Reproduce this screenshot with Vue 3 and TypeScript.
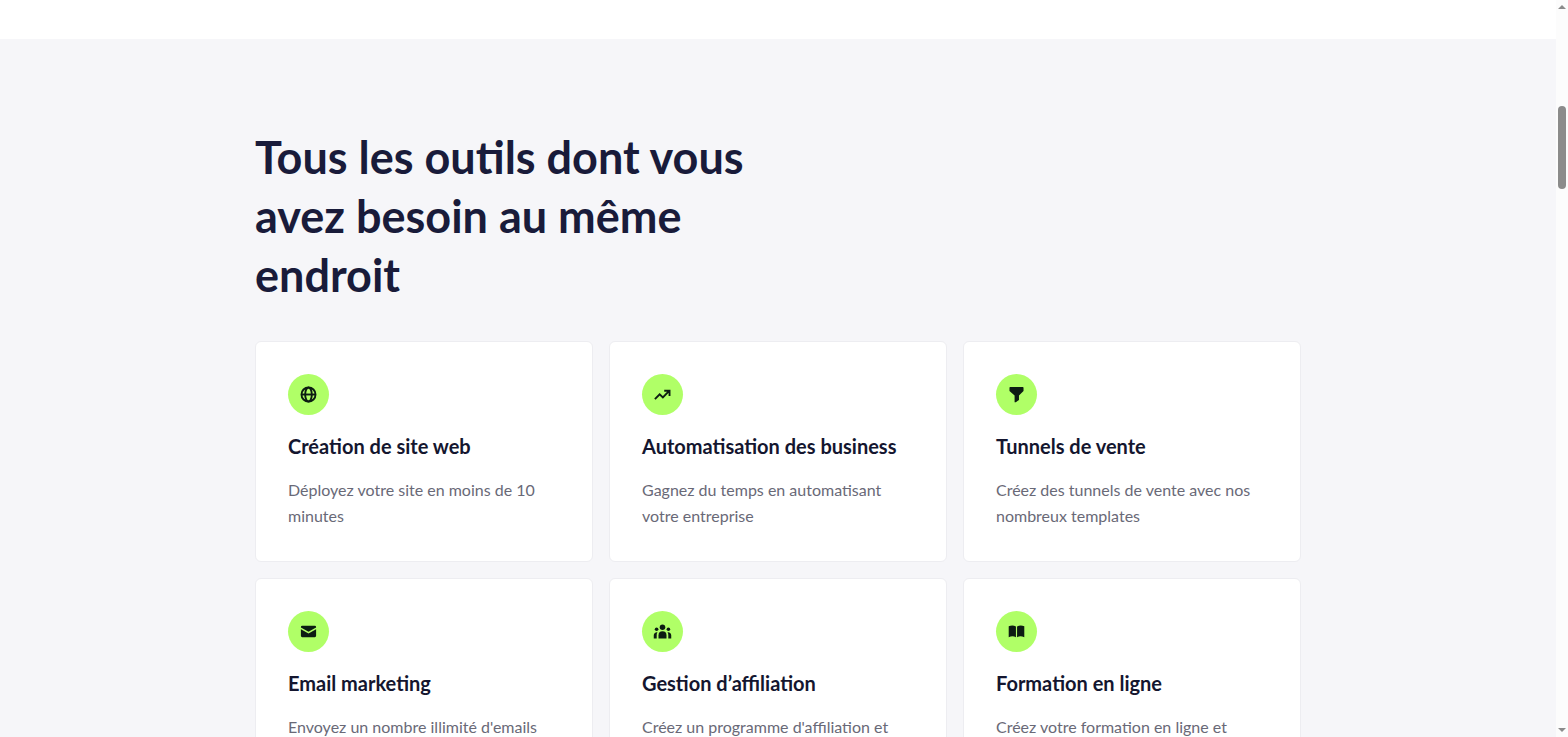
<script setup lang="ts">
type IconName = 'globe' | 'trend' | 'funnel' | 'mail' | 'group' | 'book'

interface Tool {
  icon: IconName
  title: string
  description: string
}

const tools: Tool[] = [
  { icon: 'globe', title: 'Création de site web', description: 'Déployez votre site en moins de 10 minutes' },
  { icon: 'trend', title: 'Automatisation des business', description: 'Gagnez du temps en automatisant votre entreprise' },
  { icon: 'funnel', title: 'Tunnels de vente', description: 'Créez des tunnels de vente avec nos nombreux templates' },
  { icon: 'mail', title: 'Email marketing', description: "Envoyez un nombre illimité d'emails" },
  { icon: 'group', title: 'Gestion d’affiliation', description: "Créez un programme d'affiliation et" },
  { icon: 'book', title: 'Formation en ligne', description: 'Créez votre formation en ligne et' },
]
</script>

<template>
  <div class="page">
    <main class="content">
      <section class="tools">
        <div class="container">
          <h2 class="heading">Tous les outils dont vous avez besoin au même endroit</h2>
          <div class="grid">
            <article v-for="tool in tools" :key="tool.title" class="card">
              <span class="badge">
                <svg class="icon" viewBox="0 0 20 20" aria-hidden="true">
                  <g v-if="tool.icon === 'globe'" class="line">
                    <circle cx="10" cy="10" r="7.4" />
                    <ellipse cx="10" cy="10" rx="3.5" ry="7.4" />
                    <path d="M3 10h14" />
                  </g>
                  <g v-else-if="tool.icon === 'trend'" class="line">
                    <path d="M2 14.800l5-5 3.400 3.300 6.400-6.600M11.800 6h5.600v5.600" />
                  </g>
                  <path v-else-if="tool.icon === 'funnel'" d="M3.4 2h13.200a.8.8 0 0 1 .8.8v3.400L12.600 11v4.800l-3.400 2.400H8V11L2.600 6.200V2.800a.8.8 0 0 1 .8-.8z" />
                  <g v-else-if="tool.icon === 'mail'">
                    <path d="M3.4 4h13.2A1.4 1.4 0 0 1 18 5.4v.4L10 10.2 2 5.8v-.4A1.4 1.4 0 0 1 3.4 4z" />
                    <path d="M2 7.6l8 4.4 8-4.4v7a1.4 1.4 0 0 1-1.4 1.4H3.4A1.4 1.4 0 0 1 2 14.6z" />
                  </g>
                  <g v-else-if="tool.icon === 'group'">
                    <circle cx="10" cy="5.4" r="2.9" />
                    <circle cx="3.800" cy="7.6" r="1.9" />
                    <circle cx="16.200" cy="7.6" r="1.9" />
                    <path d="M5.8 17.4v-3.4a4.2 4.2 0 0 1 8.4 0v3.4z" />
                    <path d="M4.7 10.8c-.6.9-.8 1.9-.8 3v3.600H.8v-3.400a3.200 3.200 0 0 1 3.900-3.200zM15.3 10.8c.6.9.8 1.9.8 3v3.600h3.100v-3.400a3.200 3.200 0 0 0-3.900-3.200z" />
                  </g>
                  <path v-else d="M1.800 4.600c2.800-1.300 5.200-1.200 7.600.2v11.200c-2.400-1.300-4.800-1.300-7.600 0zM18.200 4.600c-2.800-1.300-5.200-1.200-7.600.2v11.200c2.400-1.300 4.800-1.300 7.600 0z" />
                </svg>
              </span>
              <h3 class="title">{{ tool.title }}</h3>
              <p class="description">{{ tool.description }}</p>
            </article>
          </div>
        </div>
      </section>
    </main>
    <div class="scrollbar" aria-hidden="true">
      <svg class="arrow" viewBox="0 0 8 4"><path d="M0 4l4-4 4 4z" /></svg>
      <div class="track"><div class="thumb"></div></div>
      <svg class="arrow" viewBox="0 0 8 4"><path d="M0 0l4 4 4-4z" /></svg>
    </div>
  </div>
</template>

<style>
body {
  margin: 0;
  background: #fff;
}
</style>

<style scoped>
.page {
  display: flex;
  height: 100vh;
  overflow: hidden;
  font-family: Lato, "Open Sans", sans-serif;
}

.content {
  flex: 1;
  min-width: 0;
  padding-top: 39px;
}

.tools {
  padding: 89px 24px 96px;
  background: #f6f6f9;
}

.container {
  max-width: 1046px;
  margin: 0 auto;
}

.heading {
  max-width: 510px;
  margin: 0 0 36px;
  font-size: 45px;
  font-weight: 700;
  line-height: 59px;
  color: #191b3a;
}

.grid {
  display: grid;
  grid-template-columns: repeat(3, 1fr);
  gap: 16px;
}

.card {
  padding: 32px;
  background: #fff;
  border: 1px solid #ededf1;
  border-radius: 6px;
}

.badge {
  display: flex;
  align-items: center;
  justify-content: center;
  width: 41px;
  height: 41px;
  border-radius: 50%;
  background: #b0ff67;
}

.icon {
  width: 19px;
  height: 19px;
  fill: #0c1c12;
}

.line {
  fill: none;
  stroke: #0c1c12;
  stroke-width: 2;
}

.title {
  margin: 18px 0;
  font-size: 20px;
  font-weight: 700;
  line-height: 26px;
  color: #14162f;
}

.description {
  margin: 0;
  font-size: 16px;
  line-height: 26px;
  color: #696977;
}

.scrollbar {
  display: flex;
  flex-direction: column;
  align-items: center;
  box-sizing: border-box;
  width: 12px;
  padding: 5px 0;
  background: #fcfcfc;
}

.arrow {
  width: 8px;
  height: 4px;
  fill: #8b8b8b;
}

.track {
  flex: 1;
  padding-top: 97px;
}

.thumb {
  width: 8px;
  height: 83px;
  border-radius: 4px;
  background: #8b8b8b;
}
</style>
